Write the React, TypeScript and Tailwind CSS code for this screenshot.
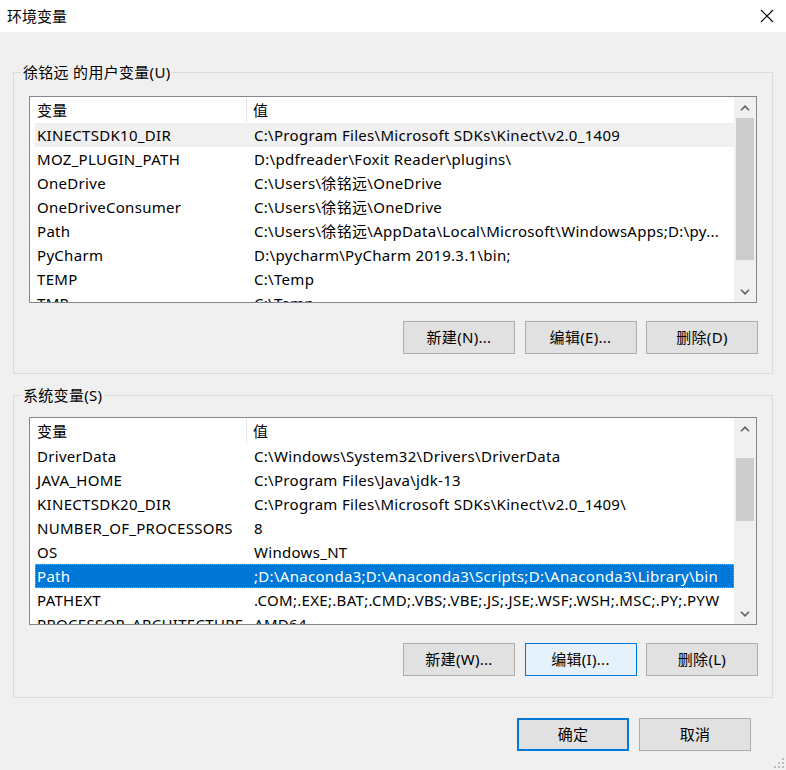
import React from 'react';

type Row = { name: string; value: string };

const userVars: Row[] = [
    { name: 'KINECTSDK10_DIR', value: 'C:\\Program Files\\Microsoft SDKs\\Kinect\\v2.0_1409' },
    { name: 'MOZ_PLUGIN_PATH', value: 'D:\\pdfreader\\Foxit Reader\\plugins\\' },
    { name: 'OneDrive', value: 'C:\\Users\\徐铭远\\OneDrive' },
    { name: 'OneDriveConsumer', value: 'C:\\Users\\徐铭远\\OneDrive' },
    { name: 'Path', value: 'C:\\Users\\徐铭远\\AppData\\Local\\Microsoft\\WindowsApps;D:\\py...' },
    { name: 'PyCharm', value: 'D:\\pycharm\\PyCharm 2019.3.1\\bin;' },
    { name: 'TEMP', value: 'C:\\Temp' },
    { name: 'TMP', value: 'C:\\Temp' },
];

const systemVars: Row[] = [
    { name: 'DriverData', value: 'C:\\Windows\\System32\\Drivers\\DriverData' },
    { name: 'JAVA_HOME', value: 'C:\\Program Files\\Java\\jdk-13' },
    { name: 'KINECTSDK20_DIR', value: 'C:\\Program Files\\Microsoft SDKs\\Kinect\\v2.0_1409\\' },
    { name: 'NUMBER_OF_PROCESSORS', value: '8' },
    { name: 'OS', value: 'Windows_NT' },
    { name: 'Path', value: ';D:\\Anaconda3;D:\\Anaconda3\\Scripts;D:\\Anaconda3\\Library\\bin' },
    { name: 'PATHEXT', value: '.COM;.EXE;.BAT;.CMD;.VBS;.VBE;.JS;.JSE;.WSF;.WSH;.MSC;.PY;.PYW' },
    { name: 'PROCESSOR_ARCHITECTURE', value: 'AMD64' },
];

function Chevron({ up }: { up?: boolean }) {
    return (
        <svg width="10" height="6" viewBox="0 0 10 6" className="text-[#606060]">
            <path d={up ? 'M1 5.2 L5 1.2 L9 5.2' : 'M1 0.8 L5 4.8 L9 0.8'} fill="none" stroke="currentColor" strokeWidth="1.6" />
        </svg>
    );
}

function Scrollbar({ thumbTop, thumbHeight }: { thumbTop: number; thumbHeight: number }) {
    return (
        <div className="w-[22px] bg-[#f0f0f0] flex flex-col shrink-0">
            <div className="h-[21px] flex items-center justify-center">
                <Chevron up />
            </div>
            <div className="flex-1 relative">
                <div className="absolute left-[2px] right-[2px] bg-[#cdcdcd]" style={{ top: thumbTop, height: thumbHeight }} />
            </div>
            <div className="h-[21px] flex items-center justify-center">
                <Chevron />
            </div>
        </div>
    );
}

function VarList({
    rows,
    selected,
    focused,
    height,
    thumbTop,
    thumbHeight,
}: {
    rows: Row[];
    selected: number;
    focused: boolean;
    height: string;
    thumbTop: number;
    thumbHeight: number;
}) {
    return (
        <div className={`${height} bg-white border border-[#828790] flex overflow-hidden`}>
            <div className="flex-1 pl-[5px] overflow-hidden">
                {/* Header */}
                <div className="grid grid-cols-[212px_1fr] h-[26px] items-center">
                    <div className="pl-[2px] border-r border-[#e5e5e5] h-[24px] flex items-center">变量</div>
                    <div className="pl-[6px]">值</div>
                </div>
                {rows.map((r, i) => {
                    const isSel = i === selected;
                    const cls = isSel
                        ? focused
                            ? 'bg-[#0078d7] text-white outline outline-1 outline-dotted outline-[#d89a52] -outline-offset-1'
                            : 'bg-[#f0f0f0]'
                        : '';
                    return (
                        <div key={r.name} className={`grid grid-cols-[212px_1fr] h-[24px] items-center whitespace-nowrap ${cls}`}>
                            <div className="pl-[2px] overflow-hidden">{r.name}</div>
                            <div className="pl-[7px] overflow-hidden">{r.value}</div>
                        </div>
                    );
                })}
            </div>
            <Scrollbar thumbTop={thumbTop} thumbHeight={thumbHeight} />
        </div>
    );
}

function WinButton({ label, variant = 'normal' }: { label: string; variant?: 'normal' | 'hover' | 'default' }) {
    const styles =
        variant === 'hover'
            ? 'bg-[#e5f1fb] border border-[#0078d7]'
            : variant === 'default'
                ? 'bg-[#e1e1e1] border-2 border-[#0078d7]'
                : 'bg-[#e1e1e1] border border-[#adadad]';
    return (
        <button className={`w-[112px] h-[33px] flex items-center justify-center text-black ${styles}`}>
            {label}
        </button>
    );
}

function GroupBox({ title, children, className }: { title: string; children: React.ReactNode; className: string }) {
    return (
        <div className={`relative mx-[13px] border border-[#dcdcdc] px-[15px] ${className}`}>
            <span className="absolute left-[7px] -top-[12px] px-[2px] bg-[#f0f0f0] leading-[22px]">{title}</span>
            {children}
        </div>
    );
}

export default function App() {
    return (
        <div
            className="w-[786px] h-[770px] bg-[#f0f0f0] relative overflow-hidden text-[15px] tracking-[0.3px] text-black"
            style={{ fontFamily: "'Noto Sans', 'Noto Sans CJK SC', sans-serif" }}
        >
            {/* Title bar */}
            <div className="h-[32px] bg-white flex items-center justify-between">
                <span className="pl-[7px] tracking-normal">环境变量</span>
                <div className="w-[46px] h-[32px] flex items-center justify-center mr-[-4px]">
                    <svg width="14" height="14" viewBox="0 0 14 14">
                        <path d="M1 1 L13 13 M13 1 L1 13" stroke="#000" strokeWidth="1.1" />
                    </svg>
                </div>
            </div>

            {/* User variables */}
            <GroupBox title="徐铭远 的用户变量(U)" className="mt-[40px] h-[302px] pt-[23px]">
                <VarList rows={userVars} selected={0} focused={false} height="h-[207px]" thumbTop={0} thumbHeight={142} />
                <div className="flex justify-end gap-[9.5px] mt-[18px] mr-[-1px]">
                    <WinButton label="新建(N)..." />
                    <WinButton label="编辑(E)..." />
                    <WinButton label="删除(D)" />
                </div>
            </GroupBox>

            {/* System variables */}
            <GroupBox title="系统变量(S)" className="mt-[21px] h-[303px] pt-[21px]">
                <VarList rows={systemVars} selected={5} focused={true} height="h-[208px]" thumbTop={19} thumbHeight={63} />
                <div className="flex justify-end gap-[9.5px] mt-[18px] mr-[-1px]">
                    <WinButton label="新建(W)..." />
                    <WinButton label="编辑(I)..." variant="hover" />
                    <WinButton label="删除(L)" />
                </div>
            </GroupBox>

            {/* Dialog buttons */}
            <div className="flex justify-end gap-[10px] mt-[20px] pr-[35px]">
                <WinButton label="确定" variant="default" />
                <WinButton label="取消" />
            </div>

            {/* Resize grip */}
            <svg className="absolute right-[1px] bottom-[1px]" width="12" height="12" viewBox="0 0 12 12">
                {[
                    [9, 1], [9, 5], [5, 5], [9, 9], [5, 9], [1, 9],
                ].map(([x, y]) => (
                    <rect key={`${x}-${y}`} x={x} y={y} width="2" height="2" fill="#bcbcbc" />
                ))}
            </svg>
        </div>
    );
}
